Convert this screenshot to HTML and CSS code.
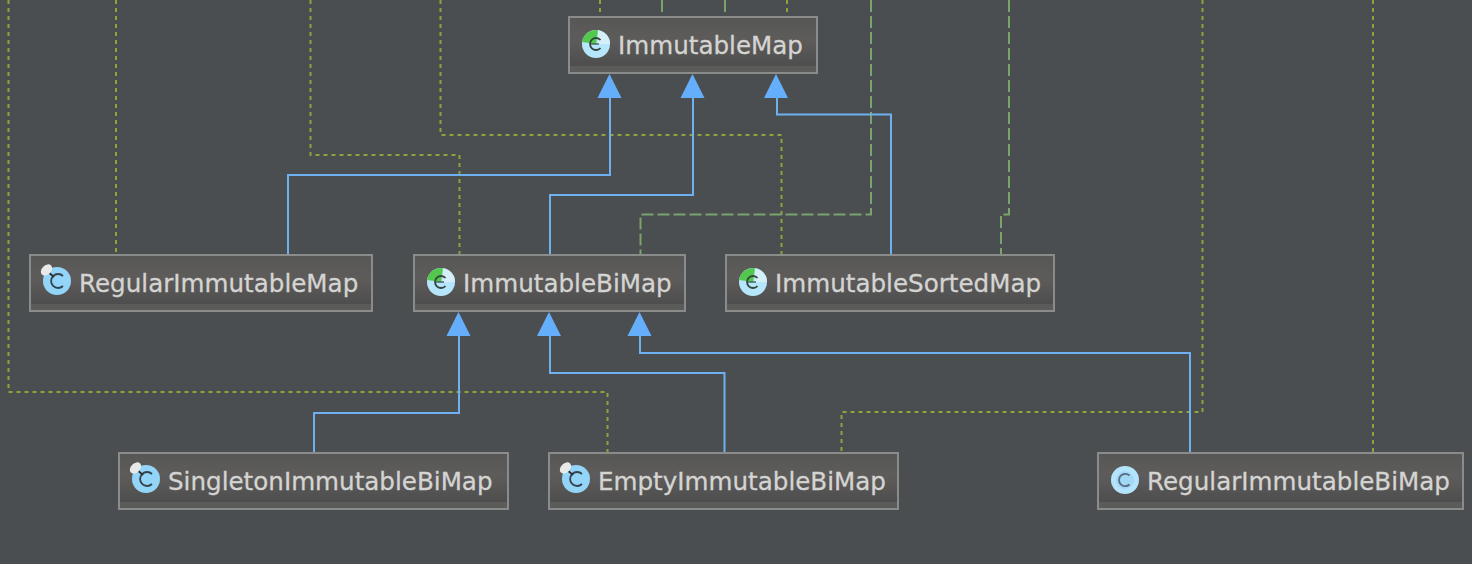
FILE: index.html
```html
<!DOCTYPE html>
<html lang="en">
<head>
<meta charset="utf-8">
<title>ImmutableMap diagram</title>
<link rel="stylesheet" href="styles.css">
</head>
<body>
<main class="canvas">
  <svg class="edges" width="1472" height="564" viewBox="0 0 1472 564">
    <g class="dot">
      <path d="M116 0V254"/>
      <path d="M310.500 0V155H459.500V254"/>
      <path d="M440.500 0V135H781.500V254"/>
      <path d="M8.500 0V392H607.500V452"/>
      <path d="M1202.500 0V412H841.500V452"/>
      <path d="M1373 0V452"/>
      <path d="M600 0V16"/>
      <path d="M787 0V16"/>
    </g>
    <g class="dash">
      <path d="M662 0V16"/>
      <path d="M725 0V16"/>
      <path d="M871 0V214.500H640.500V254"/>
      <path d="M1009 0V214.500H1001V254"/>
    </g>
    <g class="inherit">
      <path d="M288 254V175H610V97"/>
      <path d="M550 254V195H693V97"/>
      <path d="M891 254V114.500H777V97"/>
      <path d="M314 452V413H459V335"/>
      <path d="M724.500 452V373H550V335"/>
      <path d="M1190 452V353H640V335"/>
    </g>
    <g class="head">
      <path d="M609.500 74L621.500 98H597.500Z"/>
      <path d="M692.500 74L704.500 98H680.500Z"/>
      <path d="M776 74L788 98H764Z"/>
      <path d="M458.500 312L470.500 336H446.500Z"/>
      <path d="M549 312L561 336H537Z"/>
      <path d="M639.500 312L651.500 336H627.500Z"/>
    </g>
  </svg>

  <svg width="0" height="0" class="defs" aria-hidden="true">
    <defs>
      <symbol id="circle" viewBox="0 0 30 30">
        <circle cx="15" cy="15" r="14" fill="#b4e4fb"/>
        <circle cx="15" cy="15" r="9" fill="#a2d8f5"/>
        <path d="M19.500 10.500A6.200 6.200 0 1 0 19.500 19.500" fill="none" stroke="#566c7a" stroke-width="1.800"/>
      </symbol>
      <symbol id="abstract" viewBox="0 0 30 30">
        <circle cx="15" cy="15" r="14" fill="#b5e6fb"/>
        <path d="M15 15L17 1.200A14 14 0 0 0 1.200 13Z" fill="#52c84c"/>
        <path d="M17 15L17 1.200A14 14 0 0 1 29 15Z" fill="#d5eef7"/>
        <path d="M19.500 11A6 6 0 1 0 19.500 19" fill="none" stroke="#34463c" stroke-width="1.800"/>
        <path d="M10 15H18" stroke="#34463c" stroke-width="1.200"/>
      </symbol>
      <symbol id="pinned" viewBox="0 0 34 34">
        <circle cx="18" cy="18" r="14" fill="#93d5f8"/>
        <path d="M24 13A7 7 0 1 0 24 23" fill="none" stroke="#33424c" stroke-width="1.800"/>
        <path d="M8 8L15 14" stroke="#2d2d2d" stroke-width="1.800"/>
        <ellipse cx="7.500" cy="7" rx="6.500" ry="4.600" transform="rotate(-45 7.500 7)" fill="#e9e9e7"/>
      </symbol>
    </defs>
  </svg>

  <div class="node node-map"><svg class="ico"><use href="#abstract"/></svg><span class="name">ImmutableMap</span></div>
  <div class="node node-regular"><svg class="ico ico-pin"><use href="#pinned"/></svg><span class="name">RegularImmutableMap</span></div>
  <div class="node node-bimap"><svg class="ico"><use href="#abstract"/></svg><span class="name">ImmutableBiMap</span></div>
  <div class="node node-sorted"><svg class="ico"><use href="#abstract"/></svg><span class="name">ImmutableSortedMap</span></div>
  <div class="node node-singleton"><svg class="ico ico-pin"><use href="#pinned"/></svg><span class="name">SingletonImmutableBiMap</span></div>
  <div class="node node-empty"><svg class="ico ico-pin"><use href="#pinned"/></svg><span class="name">EmptyImmutableBiMap</span></div>
  <div class="node node-regbi"><svg class="ico"><use href="#circle"/></svg><span class="name">RegularImmutableBiMap</span></div>
</main>
</body>
</html>
```

FILE: styles.css
```css
html, body {
  margin: 0;
  padding: 0;
  width: 1472px;
  height: 564px;
  overflow: hidden;
  background: #4b4e51;
}

.canvas {
  position: relative;
  width: 1472px;
  height: 564px;
  background: #4b4e51;
}

.edges {
  position: absolute;
  left: 0;
  top: 0;
  display: block;
}

.defs {
  position: absolute;
}

.edges path {
  fill: none;
}

.dot path {
  stroke: #8fa33a;
  stroke-width: 2;
  stroke-dasharray: 4 4;
}

.dash path {
  stroke: #7ba36c;
  stroke-width: 2;
  stroke-dasharray: 12 4;
}

.inherit path {
  stroke: #6fb0f0;
  stroke-width: 2;
}

.edges .head path {
  fill: #64aefc;
}

.node {
  position: absolute;
  box-sizing: border-box;
  height: 58px;
  display: flex;
  align-items: center;
  padding-left: 11px;
  padding-bottom: 2px;
  gap: 7px;
  border: 2px solid #8a8b8b;
  background: linear-gradient(#575756 0, #5d5c5b 40%, #4f4e4e 88%, #5b5b5a 88%, #5b5b5a 100%);
  font-family: "DejaVu Sans", sans-serif;
}

.node-map { left: 568px; top: 16px; width: 250px; }
.node-regular { left: 29px; top: 254px; width: 344px; }
.node-bimap { left: 413px; top: 254px; width: 273px; }
.node-sorted { left: 725px; top: 254px; width: 330px; }
.node-singleton { left: 118px; top: 452px; width: 391px; }
.node-empty { left: 548px; top: 452px; width: 351px; }
.node-regbi { left: 1097px; top: 452px; width: 367px; }

.ico {
  width: 30px;
  height: 30px;
  flex: none;
}

.ico-pin {
  width: 34px;
  height: 34px;
  margin-left: -3px;
  margin-right: -1px;
  margin-top: -4px;
}

.name {
  color: #d4d4d2;
  font-size: 24.6px;
  position: relative;
  top: 1px;
  -webkit-text-stroke: 0.3px #d4d4d2;
  white-space: nowrap;
}
```
